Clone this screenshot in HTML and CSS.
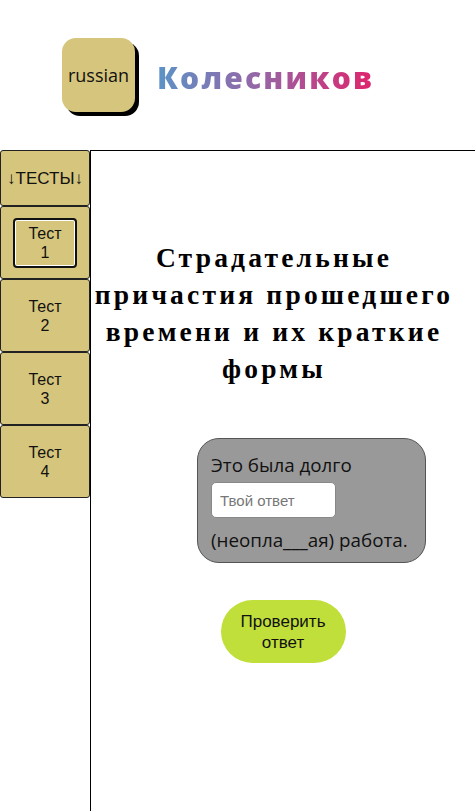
FILE: index.html
```html
<!DOCTYPE html>
<html lang="ru">

<head>
    <meta charset="UTF-8">
    <meta name="viewport" content="width=device-width, initial-scale=1.0">
    <title>Колесников</title>
    <link rel="stylesheet" href="styles.css">
</head>

<body>
    <header class="header">
        <div class="logo">russian</div>
        <div class="brand">Колесников</div>
    </header>
    <div class="page">
        <nav class="sidebar">
            <div class="side-item side-title">↓ТЕСТЫ↓</div>
            <div class="side-item"><span class="test-link active">Тест<br>1</span></div>
            <div class="side-item"><span class="test-link">Тест<br>2</span></div>
            <div class="side-item"><span class="test-link">Тест<br>3</span></div>
            <div class="side-item"><span class="test-link">Тест<br>4</span></div>
        </nav>
        <main class="content">
            <h1>Страдательные причастия прошедшего времени и их краткие формы</h1>
            <div class="question">
                <p>Это была долго</p>
                <input type="text" placeholder="Твой ответ">
                <p>(неопла___ая) работа.</p>
            </div>
            <div class="check-wrap">
                <button class="check">Проверить<br>ответ</button>
            </div>
        </main>
    </div>
</body>

</html>
```

FILE: styles.css
```css
* {
    box-sizing: border-box;
    margin: 0;
    padding: 0;
}

body {
    font-family: "Liberation Sans", Arial, sans-serif;
    background-color: #fff;
    color: #000;
}

.header {
    height: 150px;
    display: flex;
    align-items: flex-start;
    padding: 38px 0 0 62px;
}

.logo {
    width: 73px;
    height: 74px;
    background-color: #d6c57c;
    border-radius: 14px;
    box-shadow: 4px 4px 0 #000;
    display: flex;
    align-items: center;
    justify-content: center;
    font-family: "Open Sans", sans-serif;
    font-size: 18px;
    color: #111;
}

.brand {
    margin: 19px 0 0 22px;
    font-family: "Open Sans", sans-serif;
    font-weight: 800;
    font-size: 30px;
    letter-spacing: 2.2px;
    background: linear-gradient(90deg, #5b93c6, #9a62a4 50%, #e0246c);
    -webkit-background-clip: text;
    background-clip: text;
    color: transparent;
}

.page {
    display: flex;
    min-height: 661px;
}

.sidebar {
    width: 90px;
    flex-shrink: 0;
}

.side-item {
    height: 73px;
    background-color: #d6c57c;
    border: 1px solid #222;
    border-radius: 3px;
    display: flex;
    align-items: center;
    justify-content: center;
    text-align: center;
    font-size: 16px;
    line-height: 19px;
    color: #111;
}

.side-title {
    height: 56px;
    font-size: 17px;
}

.test-link {
    display: block;
    width: 64px;
    padding: 4px 0;
    border: 2px solid transparent;
    border-radius: 4px;
}

.test-link.active {
    border-color: #111;
    box-shadow: inset 0 0 0 1px #fff;
}

.content {
    flex: 1;
    border-left: 1px solid #000;
    border-top: 1px solid #000;
}

.content h1 {
    margin: 88px 18px 0 0;
    text-align: center;
    font-family: "Liberation Serif", "Times New Roman", serif;
    font-weight: 700;
    font-size: 27.5px;
    line-height: 37px;
    letter-spacing: 3.2px;
}

.question {
    width: 229px;
    margin: 51px 0 0 106px;
    padding: 14px 13px 10px;
    background-color: #999;
    border: 1px solid #555;
    border-radius: 22px;
    font-family: "Open Sans", sans-serif;
    font-size: 18.8px;
    line-height: 24px;
    color: #111;
}

.question input {
    display: block;
    width: 125px;
    height: 36px;
    margin: 5px 0 10px;
    padding: 0 8px;
    border: 1px solid #888;
    border-radius: 5px;
    font-family: "Liberation Sans", Arial, sans-serif;
    font-size: 15px;
}

.question input::placeholder {
    color: #777;
}

.check-wrap {
    display: flex;
    justify-content: center;
    margin-top: 37px;
}

.check {
    width: 125px;
    height: 63px;
    border: none;
    border-radius: 32px;
    background-color: #c1df3a;
    font-family: "Liberation Sans", Arial, sans-serif;
    font-size: 17px;
    line-height: 21px;
    color: #111;
}
```
